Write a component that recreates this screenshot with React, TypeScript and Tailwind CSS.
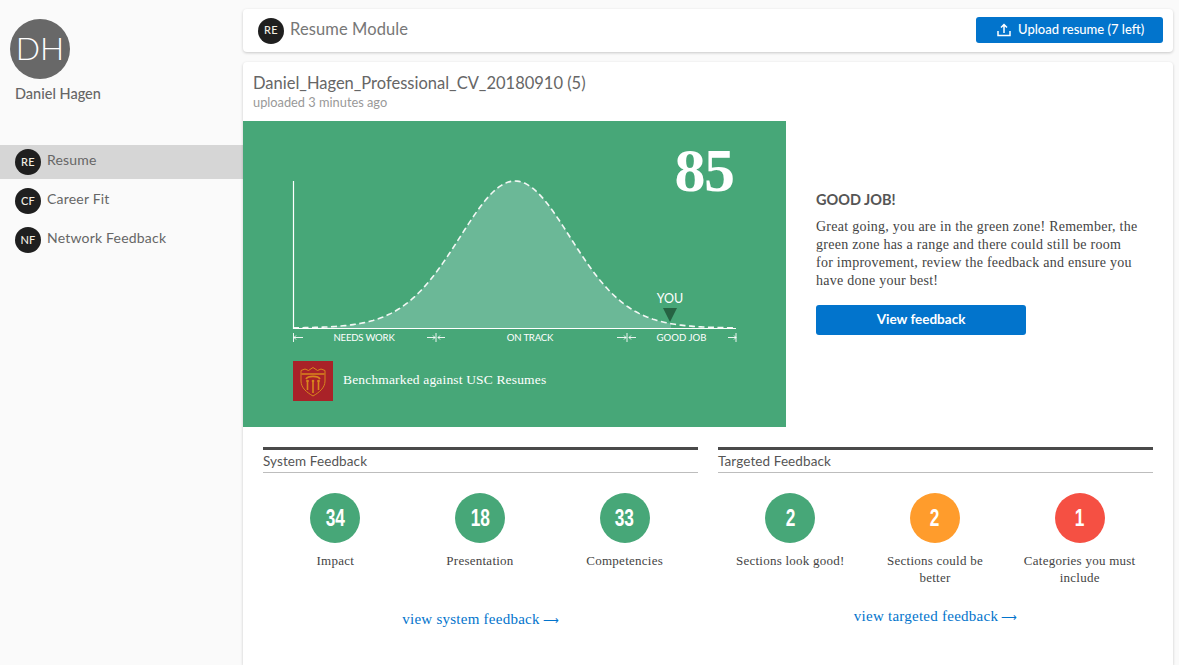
import React from "react";

const SANS = "font-['Lato','Noto_Sans',sans-serif]";
const SERIF = "font-['Liberation_Serif','Times_New_Roman',serif]";

function Badge({ label }: { label: string }) {
  return (
    <span className="flex h-[26px] w-[26px] shrink-0 items-center justify-center rounded-full bg-[#1f1f1f] text-[11px] font-medium tracking-[0.3px] text-[#f4efe4]">
      {label}
    </span>
  );
}

function curve(x: number) {
  const a = Math.exp(-Math.pow(x - 272, 2) / (2 * 50 * 50));
  const b = Math.exp(-Math.pow(x - 272, 2) / (2 * 64 * 64));
  return 207 - 147 * (0.5 * a + 0.5 * b);
}

function pathFrom(from: number, to: number) {
  const pts: string[] = [];
  for (let x = from; x <= to; x += 2) pts.push(`${x} ${curve(x).toFixed(2)}`);
  return "M" + pts.join(" L");
}

function Chart() {
  const tick = "#ffffff";
  return (
    <svg width="543" height="240" viewBox="0 0 543 240" className="block">
      <path d={`${pathFrom(50, 428)} L428 207 L50 207 Z`} fill="#6bb897" />
      <path d={pathFrom(50, 492)} fill="none" stroke="#f2f7f4" strokeWidth="1.6" strokeDasharray="6 3.5" />
      <path d="M50.5 60 V207.5 H493" fill="none" stroke={tick} strokeWidth="1.2" />
      <g stroke={tick} strokeWidth="0.9" fill="none">
        <path d="M50.5 212 V221 M50.5 216.5 H60 M53 214.5 L51 216.5 L53 218.5" />
        <path d="M184 216.5 H192 M190 214.5 L192 216.5 L190 218.5 M193 212 V221 M195 216.5 H202 M197 214.5 L195 216.5 L197 218.5" />
        <path d="M374 216.5 H383 M381 214.5 L383 216.5 L381 218.5 M384 212 V221 M386 216.5 H393 M388 214.5 L386 216.5 L388 218.5" />
        <path d="M485 216.5 H493 M491 214.5 L493 216.5 L491 218.5 M493 212 V221" />
      </g>
      <path d="M420 187 H434 L427 201 Z" fill="#266343" />
      <g fill="#ffffff" fontFamily="Lato, sans-serif" textAnchor="middle">
        <text x="427" y="182" fontSize="12.5">YOU</text>
        <text x="121" y="220" fontSize="9.6" letterSpacing="-0.2">NEEDS WORK</text>
        <text x="287" y="220" fontSize="9.6" letterSpacing="-0.2">ON TRACK</text>
        <text x="438.5" y="220" fontSize="9.6">GOOD JOB</text>
      </g>
      <text x="461" y="70" textAnchor="middle" fill="#ffffff" fontFamily="'Liberation Serif', serif" fontWeight="700" fontSize="62" letterSpacing="-1.5">85</text>
    </svg>
  );
}

function Crest() {
  return (
    <svg width="40" height="40" viewBox="0 0 40 40" className="shrink-0">
      <rect width="40" height="40" fill="#a92228" />
      <g fill="none" stroke="#d9861d" strokeWidth="1">
        <path d="M8 9.5 L12 8 L15.5 9.5 L20 6.5 L24.5 9.5 L28 8 L32 9.5 V20 C32 27 26 31.5 20 35 C14 31.5 8 27 8 20 Z" />
        <path d="M8.5 13 H31.5 M13 18 C15 14.5 25 14.5 27 18" strokeWidth="1.6" />
        <path d="M14.5 19 V29 M20 19 V32 M25.5 19 V29" strokeWidth="1.6" />
      </g>
      <g fill="#d9861d">
        <circle cx="14.5" cy="20" r="1.3" />
        <circle cx="20" cy="20" r="1.3" />
        <circle cx="25.5" cy="20" r="1.3" />
      </g>
    </svg>
  );
}

function Stat({ value, label, color }: { value: string; label: string; color: string }) {
  return (
    <div className="flex flex-col items-center">
      <div className={`flex h-[50px] w-[50px] items-center justify-center rounded-full ${color} font-['Liberation_Sans',sans-serif] text-[24px] font-bold text-white`}>
        <span className="inline-block scale-x-[0.72]">{value}</span>
      </div>
      <div className={`mt-[9px] w-[120px] text-center text-[13px] leading-[17px] tracking-[0.25px] text-[#444] ${SERIF}`}>{label}</div>
    </div>
  );
}

function FeedbackColumn({ title, children, link, linkClass }: { title: string; children: React.ReactNode; link: string; linkClass: string }) {
  return (
    <section>
      <div className="border-t-[3px] border-b border-t-[#4a4a4a] border-b-[#bdbdbd] pt-[2px] pb-[2px]">
        <h2 className="text-[13.5px] leading-[18px] tracking-[0.1px] text-[#555]">{title}</h2>
      </div>
      <div className="mt-5 grid grid-cols-3 pr-px">{children}</div>
      <div className={`text-center text-[15px] leading-[18px] tracking-[0.25px] text-[#0274cc] ${SERIF} ${linkClass}`}>
        {link}<span className="ml-[3px] text-[11px] tracking-normal">⟶</span>
      </div>
    </section>
  );
}

export default function App() {
  const nav = [
    ["RE", "Resume", true],
    ["CF", "Career Fit", false],
    ["NF", "Network Feedback", false],
  ] as const;
  return (
    <div className={`flex h-[665px] w-[1179px] overflow-hidden bg-[#fafafa] ${SANS}`}>
      <aside className="w-[243px] shrink-0">
        <div className="ml-[10px] mt-[19px] flex h-[60px] w-[60px] items-center justify-center rounded-full bg-[#686868] pb-[2px] text-[32px] font-light text-white">
          DH
        </div>
        <div className="ml-[15px] mt-[6px] text-[14.5px] font-medium leading-[18px] text-[#666]">Daniel Hagen</div>
        <nav className="mt-[42px]">
          {nav.map(([badge, label, active]) => (
            <div key={badge} className={`flex h-[39px] items-start gap-[6px] px-[15px] pt-[4px] ${active ? "bg-[linear-gradient(#d6d6d6_34px,transparent_34px)]" : ""}`}>
              <Badge label={badge} />
              <span className="text-[14px] leading-[22px] tracking-[0.2px] text-[#666]">{label}</span>
            </div>
          ))}
        </nav>
      </aside>
      <main className="flex w-[930px] shrink-0 flex-col pt-[9px]">
        <header className="flex h-[43px] items-center justify-between rounded bg-white pl-[15px] pr-[10px] shadow-[0_1px_3px_rgba(0,0,0,0.2)]">
          <div className="flex items-center gap-[6px]">
            <Badge label="RE" />
            <span className="pb-[2px] text-[16.5px] tracking-[0.1px] text-[#777]">Resume Module</span>
          </div>
          <button className="mb-px flex h-[26px] w-[187px] items-center gap-[7px] rounded-[3px] bg-[#0274cc] pl-[21px] text-[13px] font-medium text-white">
            <svg width="14" height="14" viewBox="0 0 14 14" fill="none" stroke="#fff">
              <path d="M7 10 V2 M4 4.5 L7 1.5 L10 4.5" strokeWidth="1.5" />
              <path d="M1 8 V12.5 H13 V8" strokeWidth="1.5" />
            </svg>
            Upload resume (7 left)
          </button>
        </header>
        <div className="mt-[10px] flex-1 rounded-t bg-white shadow-[0_1px_3px_rgba(0,0,0,0.2)]">
          <div className="h-[59px] px-[10px] pt-[11px]">
            <h1 className="text-[16.5px] leading-[20px] text-[#666]">Daniel_Hagen_Professional_CV_20180910 (5)</h1>
            <p className="text-[12.8px] leading-[18px] text-[#999]">uploaded 3 minutes ago</p>
          </div>
          <div className="flex">
            <div className="h-[306px] w-[543px] shrink-0 bg-[#47a778]">
              <Chart />
              <div className="flex items-center gap-[10px] pl-[50px]">
                <Crest />
                <span className={`pb-[2px] text-[13.5px] tracking-[0.16px] text-white ${SERIF}`}>Benchmarked against USC Resumes</span>
              </div>
            </div>
            <div className="pl-[30px] pr-[30px] pt-[70px]">
              <h3 className="text-[14.5px] font-bold leading-[18px] text-[#555]">GOOD JOB!</h3>
              <p className={`mt-[9px] w-[324px] text-[14px] leading-[18px] tracking-[0.26px] text-[#444] ${SERIF}`}>
                Great going, you are in the green zone! Remember, the green zone has a range and there could still be room for improvement, review the feedback and ensure you have done your best!
              </p>
              <button className="mt-[15px] h-[30px] w-[210px] rounded-[3px] bg-[#0274cc] pb-px text-[13.5px] font-bold text-white">View feedback</button>
            </div>
          </div>
          <div className="mt-5 grid grid-cols-[435px_435px] gap-5 pl-5">
            <FeedbackColumn title="System Feedback" link="view system feedback" linkClass="mt-[41px]">
              <Stat value="34" label="Impact" color="bg-[#47a778]" />
              <Stat value="18" label="Presentation" color="bg-[#47a778]" />
              <Stat value="33" label="Competencies" color="bg-[#47a778]" />
            </FeedbackColumn>
            <FeedbackColumn title="Targeted Feedback" link="view targeted feedback" linkClass="mt-[21px]">
              <Stat value="2" label="Sections look good!" color="bg-[#47a778]" />
              <Stat value="2" label="Sections could be better" color="bg-[#ff9c2c]" />
              <Stat value="1" label="Categories you must include" color="bg-[#f55043]" />
            </FeedbackColumn>
          </div>
        </div>
      </main>
    </div>
  );
}
